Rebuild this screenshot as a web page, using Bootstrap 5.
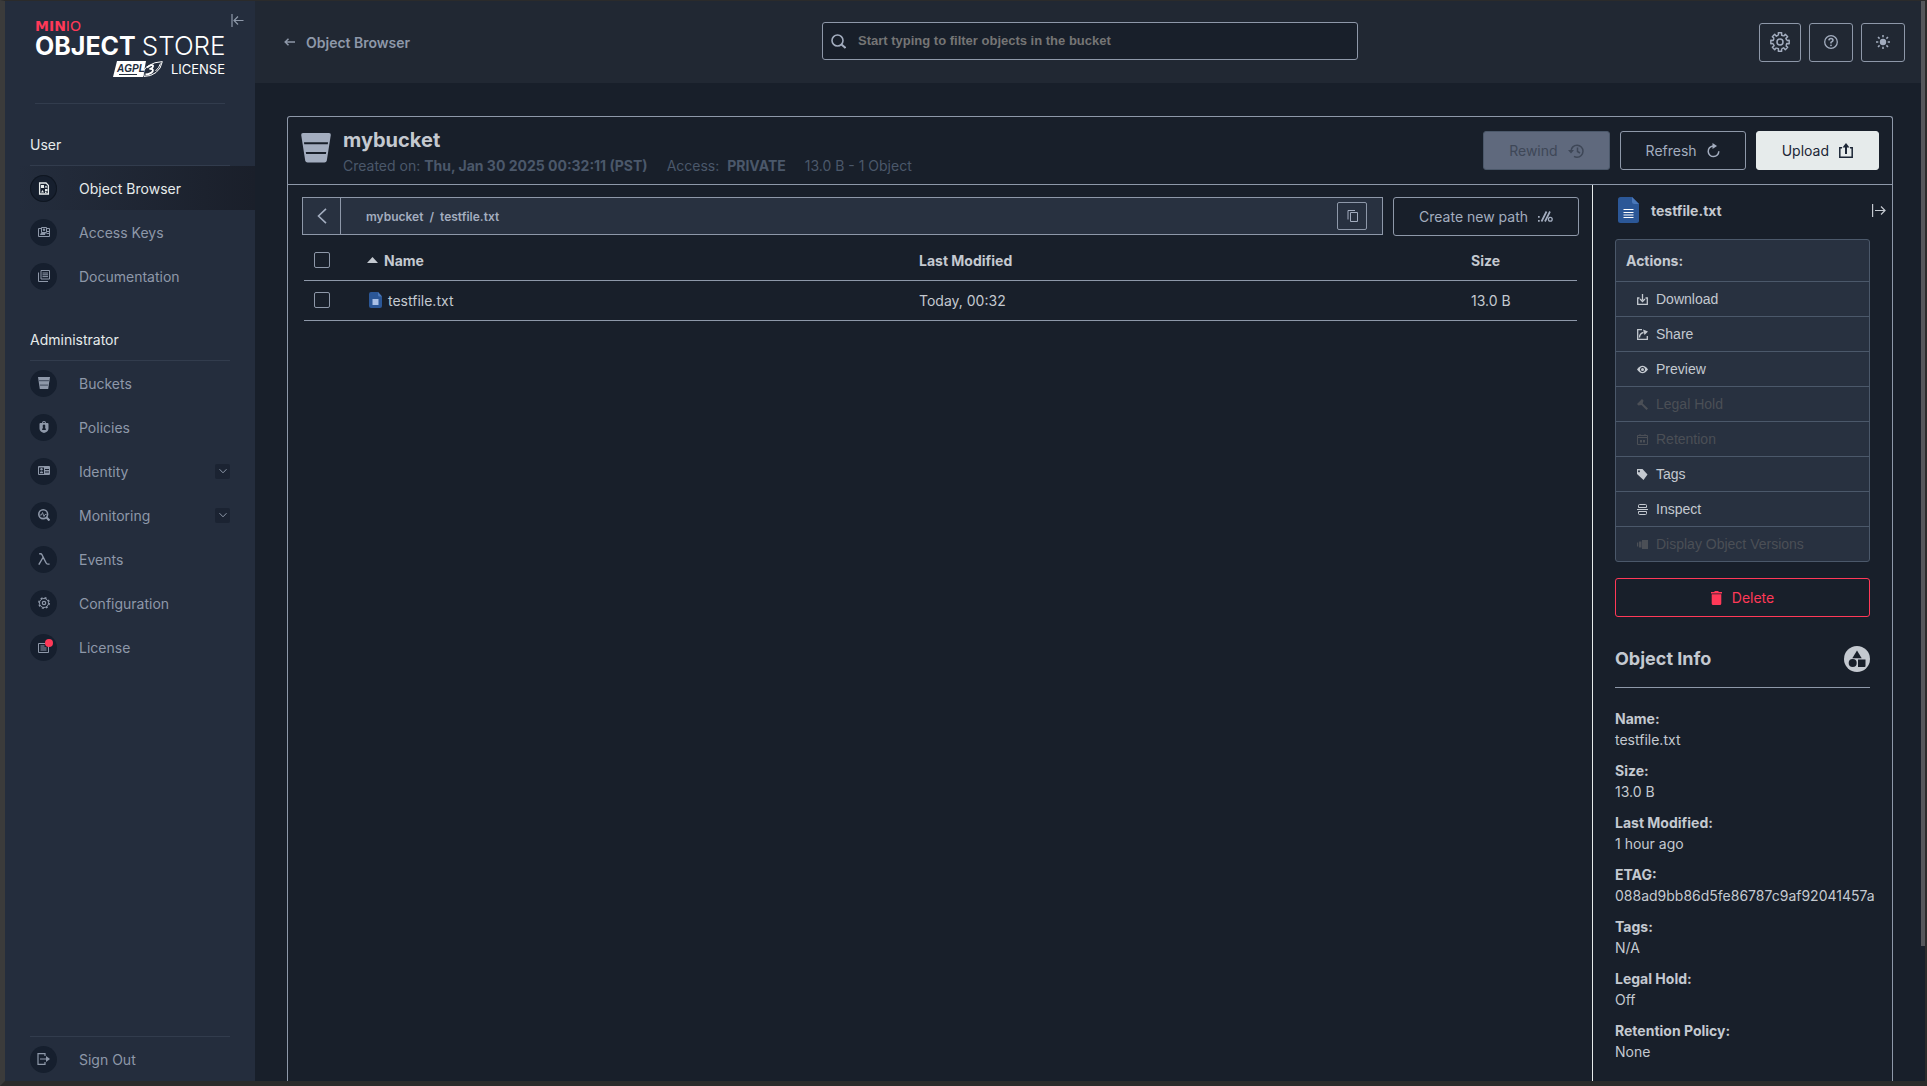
<!DOCTYPE html>
<html lang="en" data-bs-theme="dark">
<head>
<meta charset="utf-8">
<meta name="viewport" content="width=device-width, initial-scale=1">
<title>MinIO Console</title>
<link href="https://cdn.jsdelivr.net/npm/bootstrap@5.3.0/dist/css/bootstrap.min.css" rel="stylesheet">
<style>
:root{--line:#8e98a9;--txt:#c4c9d0;--muted:#4b586a;--soft:#8e98a9;--panel:#283140;--bg:#181f2a;--steel:#4b586a;--red:#ff3958}
body{font-family:Inter,"Liberation Sans",sans-serif;font-size:14px;line-height:21px;color:var(--txt);background:var(--bg)}
h1,h2,h3{color:var(--txt)}
a{text-decoration:none;color:inherit}
svg{display:block;flex:none;fill:currentColor}
.ln{fill:none;stroke:currentColor}
.frame{min-height:100vh;border:solid #2b2b2b;border-width:1px 2px 5px 5px;border-left-color:#3b3b3b;position:relative}
.thumb{position:absolute;right:0;top:0;width:4px;height:87.5%;background:#55575b}
/* sidebar */
.side{width:250px;flex:none;background:#242d3d;color:var(--soft)}
.brand{margin:0 30px;height:103px;border-bottom:1px solid #323c4d;padding-top:18px;color:#fff}
.brand .b-top{font:700 14px/14px "DejaVu Sans",sans-serif;color:var(--red)}
.brand .b-top span{font-weight:400}
.brand .b-main{font-size:25px;line-height:26px;font-weight:700;white-space:nowrap}
.brand .b-main span{font-size:26px;font-weight:300}
.brand .b-lic{font-size:13px;line-height:20px}
.collapse-btn{position:absolute;left:226px;top:13px}
.bare{background:none;border:0;padding:0;color:inherit}
.side h2{font-size:14px;line-height:21px;font-weight:400;color:#e6ebeb;margin:31px 25px 0;padding-bottom:10px;border-bottom:1px solid #323c4d}
.side .brand + h2{margin-top:30px}
.side a{height:44px;padding:0 25px;gap:22px}
.dot{width:27px;height:27px;border-radius:50%;background:#161f2e;position:relative}
.side a.on{color:#e6ebeb;background:linear-gradient(90deg,#242d3d 5%,#1a1f2a)}
.side a.on .dot{box-shadow:inset 0 0 0 1px #0f1621}
.note{position:absolute;left:15px;top:5px;width:8px;height:8px;border-radius:50%;background:var(--red)}
.chev{width:15px;height:15px;background:#1b2332;border-radius:2px}
.out{border-top:1px solid #323c4d;margin:0 25px}
.side .out a{padding:0}
/* top bar */
.main-col{min-width:0}
.top{height:82px;background:#212833;padding:0 20px;display:grid;grid-template-columns:1fr minmax(0,536px) 1fr}
.top .crumb{font-weight:600;color:var(--soft);gap:11px;padding-left:9px}
.search{position:relative;color:#a3adbf;padding-bottom:2px}
.search svg{position:absolute;left:9px;top:12px}
.search input{height:38px;width:100%;background:var(--bg);border:1px solid var(--line);border-radius:3px;padding:0 35px 2px;font:700 13px "Liberation Sans",sans-serif;color:var(--txt)}
.search input::placeholder{color:#757575;opacity:1}
.cbtn{height:39px;border:1px solid var(--line);border-radius:3px;background:none;color:#a3adbf;padding:0 25px;gap:10px;font-size:14px}
.cbtn.sq{width:44px;padding:0}
.cbtn.sq:first-child{width:42px}
.cbtn.off{background:#5f697d;border-color:#4b586a;color:#3e4757}
.cbtn.call{background:#e6ebeb;border-color:#e6ebeb;color:#1c2636}
.cbtn.del{border-color:var(--red);color:var(--red)}
/* content */
.page{padding:33px 32px 0}
.boxed{border:1px solid var(--line);border-bottom:0;border-radius:3px 3px 0 0}
.bhead{height:68px;padding:11px 13px 0;border-bottom:1px solid var(--line)}
.bhead h1{font-size:20px;line-height:24px;font-weight:700;margin:0 0 3px}
.bk{color:#a3adbf;margin-top:5px}
.bk-text{margin-left:12px}
.acts-top,.gap-path{gap:10px}
.acts-top{padding-top:3px}
.meta{color:var(--muted);gap:19px}
.list-pane{padding:12px 13px 0 14px;min-width:0}
.pathbar{height:38px;border:1px solid var(--line);background:var(--panel);color:#a3adbf;font-weight:600;font-size:12px}
.pathbar .up{width:38px;align-self:stretch;border-right:1px solid var(--line)}
.trail{padding-left:25px}
.copy{width:30px;height:28px;border:1px solid var(--line);border-radius:2px;margin-right:15px}
.tbl{width:calc(100% - 4px);margin:5px 2px 0;table-layout:fixed;border-collapse:collapse}
.tbl th,.tbl td{height:40px;padding:0;border-bottom:1px solid var(--line);vertical-align:middle}
.tbl th{font-weight:700;height:39px}
.tbl .c1{width:63px;padding-left:10px}
.tbl .c3{width:552px}.tbl .c4{width:106px}
.tbl input{appearance:none;display:block;width:16px;height:16px;border:1px solid var(--line);border-radius:2px;background:none;margin:0}
.nm{gap:6px}
.tbl td .nm{padding-left:2px}
.side-pane{width:300px;flex:none;border-left:1px solid #e6ebeb;padding:12px 22px 0}
.phead{gap:12px;padding-left:3px;margin-right:-16px}
.acts{border:1px solid var(--steel);border-radius:3px;background:var(--panel);margin-top:16px}
.acts h3{font-size:14px;line-height:21px;font-weight:700;margin:0;padding:10px}
.acts button{width:100%;height:35px;border-top:1px solid var(--steel);padding-left:21px;gap:8px;font:14px "Liberation Sans",sans-serif;color:var(--txt)}
.acts button:disabled{color:#4b4f56}
.info h2{font-size:18px;line-height:26px;font-weight:700;margin:0}
.info{margin-top:29px;padding-bottom:15px;border-bottom:1px solid var(--line)}
.facts{margin:20px 0 0}
.facts dt{font-weight:700;margin-bottom:0}
.facts dd{margin:0 0 10px;white-space:nowrap}
</style>
</head>
<body>
<svg width="0" height="0" class="position-absolute" aria-hidden="true">
<symbol id="bucket" viewBox="0 0 30 30"><path d="M2 0h26q2 0 1.800 2L25.800 27.500q-.4 2-2.300 2h-17q-1.900 0-2.300-2L.2 2Q0 0 2 0z"/><path fill="#181f2a" d="M3 9.300h24l-.2 1.900H3.200zM4.800 19h20.400l-.3 1.900H5.100z"/></symbol>
<symbol id="bk-s" viewBox="0 0 12 12"><path d="M0 0h12L10.200 12H1.800z"/><path fill="#4e586a" d="M1 3h10l-.2 1.200H1.200zM1.900 7.500h8.200l-.2 1.200H2.100z"/></symbol>
<symbol id="chev" viewBox="0 0 8 8"><path class="ln" d="M.5 2.200 4 5.800 7.500 2.200"/></symbol>
<symbol id="tooth" overflow="visible"><path class="ln" stroke-width="1.400" stroke-linejoin="round" d="M6.700-1.550 9.200-1.700V1.700L6.700 1.550A6.900 6.900 0 0 1 5.850 3.660"/></symbol>
<symbol id="doc" viewBox="0 0 21 26"><path fill="#2b5797" d="M2.500 0H14l7 7v16.500q0 2.500-2.500 2.500h-16Q0 26 0 23.500v-21Q0 0 2.500 0z"/><path fill="#4a78ba" d="M14 0v4.500Q14 7 16.500 7H21z"/><path fill="#fff" d="M5.500 12h10v1h-10zm0 3h10v1h-10zm0 2.500h10v1h-10zm0 2.500h10v1h-10z"/></symbol>
<symbol id="doc-s" viewBox="0 0 13 16"><path fill="#2b5797" d="M2 0h7l4 4.500V14q0 2-2 2H2q-2 0-2-2V2q0-2 2-2z"/><path fill="#4a78ba" d="M9 0v3q0 1.500 1.500 1.500H13z"/><path fill="#a9c0e6" d="M3.500 7h6v6h-6z"/></symbol>
</svg>
<div class="frame d-flex">
<div class="thumb"></div>
<nav class="side d-flex flex-column position-relative">
  <button class="bare collapse-btn" aria-label="Collapse menu"><svg width="13" height="13" viewBox="0 0 13 13"><path class="ln" stroke-width="1.200" d="M1 0v13M12.500 6.500H3.500M7 2.500l-4 4 4 4"/></svg></button>
  <div class="brand">
    <div class="b-top">MIN<span>IO</span></div>
    <div class="b-main">OBJECT <span>STORE</span></div>
    <div class="b-lic d-flex justify-content-end align-items-center gap-2">
      <svg width="50" height="16" viewBox="0 0 50 16"><path fill="#fff" d="M4 0h29l-3 16H0z"/><path fill="#242d3d" stroke="#fff" d="M31 15.400Q29 8 36 4.500 41 1 49.300.6 48 8 43 11.500 38 15.600 31 15.400z"/><path class="ln" stroke="#fff" stroke-width="1.800" d="M34 6.500Q39 3 40 4.500 40.500 7 36.500 8q4-.5 3.300 2-1.500 3-7.300 3.500"/><path class="ln" stroke="#fff" d="M42.500 10Q46 7 47.500 2.500"/><text x="4" y="11" font-family="Liberation Sans" font-size="10" font-weight="700" font-style="italic" fill="#242d3d">AGPL</text><path fill="#242d3d" d="M6 13h18v1H6z"/></svg>
      <span>LICENSE</span>
    </div>
  </div>
  <h2>User</h2>
  <a href="#" class="on d-flex align-items-center"><span class="dot d-flex align-items-center justify-content-center"><svg width="12" height="13" viewBox="0 0 12 13"><path class="ln" stroke-width="1.300" d="M1.600 1h6.400l2.400 2.400V12H1.600z"/><path d="M3 3h3v3H3zM6.500 5.500l1.500-2 1.500 2zM7 7h2.500v2H7zM3 10.500 4.500 8l1.500 2.500zM7 9.500h1.500V11H7z"/></svg></span>Object Browser</a>
  <a href="#" class="d-flex align-items-center"><span class="dot d-flex align-items-center justify-content-center"><svg width="12" height="10" viewBox="0 0 12 10"><path class="ln" d="M3 1.500H.5v8h11v-8H9M3.500.5h5v5h-5z"/><circle cx="6" cy="2.700" r="1.200"/><path d="M2 8q0-2 2-2.500h4Q7 7 7 8zM8.500 4H11v1H8.500zm0 2H11v1H8.500z"/></svg></span>Access Keys</a>
  <a href="#" class="d-flex align-items-center"><span class="dot d-flex align-items-center justify-content-center"><svg width="12" height="12" viewBox="0 0 12 12"><path class="ln" d="M3 .5h8.500v8.500H3zM.5 2.500v9H10M4.500 3H10M4.500 4.800H10M4.500 6.600H10"/></svg></span>Documentation</a>
  <h2>Administrator</h2>
  <a href="#" class="d-flex align-items-center"><span class="dot d-flex align-items-center justify-content-center"><svg width="12" height="12"><use href="#bk-s"/></svg></span>Buckets</a>
  <a href="#" class="d-flex align-items-center"><span class="dot d-flex align-items-center justify-content-center"><svg width="10" height="12" viewBox="0 0 10 12"><path fill-rule="evenodd" d="M3 2q0-2 2-2t2 2h1.500q1 0 1 1v4.500Q9.500 10.500 5 12 .5 10.500.5 7.500V3q0-1 1-1zm1 0h2q0-1-1-1T4 2zm1 1.500A1.500 1.500 0 0 0 4 6L3 9h4L6 6a1.500 1.500 0 0 0-1-2.500z"/></svg></span>Policies</a>
  <a href="#" class="d-flex align-items-center"><span class="dot d-flex align-items-center justify-content-center"><svg width="12" height="10" viewBox="0 0 12 10"><path fill-rule="evenodd" d="M1 0h10q1 0 1 1v7q0 1-1 1H1Q0 9 0 8V1q0-1 1-1zm0 1.500V8h5V1.500zM7 3v1h4V3zm0 2.500v1h4v-1z"/><circle cx="3.500" cy="3.300" r="1.200"/><path d="M1.800 7.200q0-2 1.700-2t1.700 2z"/></svg></span>Identity<span class="chev ms-auto d-flex align-items-center justify-content-center"><svg width="8" height="8"><use href="#chev"/></svg></span></a>
  <a href="#" class="d-flex align-items-center"><span class="dot d-flex align-items-center justify-content-center"><svg width="12" height="12" viewBox="0 0 12 12"><circle class="ln" stroke-width="1.600" cx="5.200" cy="5.200" r="4.400"/><path class="ln" stroke-width="2.200" d="m8.300 8.300 3.200 3.200"/><path class="ln" stroke-width=".9" d="M2 6h1.500l1-2.500 1.500 4 1-2h1.500"/></svg></span>Monitoring<span class="chev ms-auto d-flex align-items-center justify-content-center"><svg width="8" height="8"><use href="#chev"/></svg></span></a>
  <a href="#" class="d-flex align-items-center"><span class="dot d-flex align-items-center justify-content-center"><svg width="12" height="12" viewBox="0 0 12 12"><path class="ln" stroke-width="1.400" d="M1.200.8h1.300q1 0 1.500 1l4 8q.6 1.300 1.800 1.300h1.800M5 4.500.8 11.700"/></svg></span>Events</a>
  <a href="#" class="d-flex align-items-center"><span class="dot d-flex align-items-center justify-content-center"><svg width="12" height="12" viewBox="0 0 12 12"><circle class="ln" cx="6" cy="6" r="4.500"/><circle class="ln" stroke-width="1.400" stroke-dasharray="2 2.120" cx="6" cy="6" r="5.250"/><circle class="ln" stroke-width="1.200" cx="6" cy="6" r="1.700"/></svg></span>Configuration</a>
  <a href="#" class="d-flex align-items-center"><span class="dot d-flex align-items-center justify-content-center"><svg width="12" height="12" viewBox="0 0 12 12"><path class="ln" d="M10.500 4v7.500H.5v-9H7M2.500 5h4M2.500 7h6M2.500 9h6"/></svg><span class="note"></span></span>License</a>
  <div class="out mt-auto"><a href="#" class="d-flex align-items-center"><span class="dot d-flex align-items-center justify-content-center"><svg width="13" height="12" viewBox="0 0 13 12"><path class="ln" stroke-width="1.200" d="M8 3V.6H1v10.800h7V9M3 6h8.500"/><path d="m9 3 4 3-4 3z"/></svg></span>Sign Out</a></div>
</nav>
<div class="flex-grow-1 d-flex flex-column main-col">
  <header class="top align-items-center">
    <a href="#" class="crumb d-flex align-items-center"><svg width="11" height="8" viewBox="0 0 11 8"><path class="ln" stroke-width="1.500" d="M11 4H1M4.500.7 1.200 4l3.300 3.300"/></svg>Object Browser</a>
    <div class="search"><svg width="15" height="15" viewBox="0 0 15 15"><circle class="ln" stroke-width="1.600" cx="6.500" cy="6.500" r="5.500"/><path class="ln" stroke-width="2" d="m10.500 10.500 4 3.500"/></svg><input type="text" aria-label="Filter objects" placeholder="Start typing to filter objects in the bucket"></div>
    <div class="d-flex justify-content-end gap-2">
      <button class="cbtn sq d-flex align-items-center justify-content-center" aria-label="Settings"><svg width="20" height="20" viewBox="-10 -10 20 20"><use href="#tooth"/><use href="#tooth" transform="rotate(45)"/><use href="#tooth" transform="rotate(90)"/><use href="#tooth" transform="rotate(135)"/><use href="#tooth" transform="rotate(180)"/><use href="#tooth" transform="rotate(225)"/><use href="#tooth" transform="rotate(270)"/><use href="#tooth" transform="rotate(315)"/><circle class="ln" stroke-width="1.500" r="3"/></svg></button>
      <button class="cbtn sq d-flex align-items-center justify-content-center" aria-label="Help"><svg width="14" height="14" viewBox="0 0 14 14"><circle class="ln" stroke-width="1.300" cx="7" cy="7" r="6.300"/><path class="ln" stroke-width="1.500" d="M4.900 5.400Q5 3.500 7 3.500t2 1.800Q9 6.300 7 7.300v1.200"/><circle cx="7" cy="10.300" r=".9"/></svg></button>
      <button class="cbtn sq d-flex align-items-center justify-content-center" aria-label="Toggle theme"><svg width="14" height="14" viewBox="0 0 14 14"><circle cx="7" cy="7" r="3.200"/><path class="ln" stroke-width="1.500" d="M7 0v2.300M7 11.700V14M0 7h2.300M11.700 7H14M2 2l1.600 1.600M10.400 10.400 12 12M12 2l-1.600 1.600M3.600 10.400 2 12"/></svg></button>
    </div>
  </header>
  <main class="page flex-grow-1 d-flex flex-column">
    <div class="boxed flex-grow-1 d-flex flex-column">
      <div class="bhead d-flex align-items-start">
        <svg class="bk" width="30" height="30"><use href="#bucket"/></svg>
        <div class="bk-text">
          <h1>mybucket</h1>
          <div class="meta d-flex"><span>Created on: <b>Thu, Jan 30 2025 00:32:11 (PST)</b></span><span>Access: &nbsp;<b>PRIVATE</b></span><span>13.0 B - 1 Object</span></div>
        </div>
        <div class="ms-auto d-flex acts-top">
          <button class="cbtn off d-flex align-items-center" disabled>Rewind<svg width="16" height="14" viewBox="0 0 16 14"><path class="ln" stroke-width="1.500" d="M3 7a6 6 0 1 1 6 6.200 6 6 0 0 1-3-.8M9.500 3.500V7.500l2.500 1.500"/><path d="M0 6h6L3 9.500z"/></svg></button>
          <button class="cbtn d-flex align-items-center">Refresh<svg width="13" height="15" viewBox="0 0 13 15"><path class="ln" stroke-width="1.500" d="M7 3H6a5.300 5.300 0 1 0 5.800 5.300"/><path d="M5.500 0 10 3 5.500 6z"/></svg></button>
          <button class="cbtn call d-flex align-items-center">Upload<svg width="14" height="15" viewBox="0 0 14 15"><path class="ln" stroke-width="1.500" d="M3 4.800H.8v9.500h12.400V4.800H11"/><path class="ln" stroke-width="2" d="M7 11V2"/><path d="M3.500 4.500 7 0l3.500 4.500z"/></svg></button>
        </div>
      </div>
      <div class="flex-grow-1 d-flex">
        <div class="list-pane flex-grow-1">
          <div class="d-flex align-items-start gap-path">
            <div class="pathbar flex-grow-1 d-flex align-items-center">
              <button class="bare up d-flex align-items-center justify-content-center" aria-label="Back"><svg width="10" height="16" viewBox="0 0 10 16"><path class="ln" stroke-width="1.600" d="M9 .8 1.500 8 9 15.200"/></svg></button>
              <span class="trail flex-grow-1">mybucket&nbsp; /&nbsp; testfile.txt</span>
              <button class="bare copy d-flex align-items-center justify-content-center" aria-label="Copy path"><svg width="11" height="12" viewBox="0 0 11 12"><path class="ln" d="M3.500 2.500h7v9h-7zM1 9.500V.5h7"/></svg></button>
            </div>
            <button class="cbtn d-flex align-items-center">Create new path<svg width="15" height="11" viewBox="0 0 15 11"><path class="ln" stroke-width="1.700" d="M3.500 10.500 8.500 .5M7 10.500 12 .5"/><path d="M0 5h1.700v1.700H0zM0 9h1.700v1.700H0z"/><circle class="ln" stroke-width="1.300" cx="12.300" cy="8.300" r="1.900"/></svg></button>
          </div>
          <table class="tbl">
            <thead><tr><th class="c1"><input type="checkbox" aria-label="Select all"></th><th><span class="d-flex align-items-center nm"><svg width="11" height="6" viewBox="0 0 11 6"><path d="M0 6 5.500 0 11 6z"/></svg>Name</span></th><th class="c3">Last Modified</th><th class="c4">Size</th></tr></thead>
            <tbody><tr><td class="c1"><input type="checkbox" aria-label="Select testfile.txt"></td><td><span class="d-flex align-items-center nm"><svg width="13" height="16"><use href="#doc-s"/></svg>testfile.txt</span></td><td>Today, 00:32</td><td>13.0 B</td></tr></tbody>
          </table>
        </div>
        <aside class="side-pane">
          <div class="d-flex align-items-center phead"><svg width="21" height="26"><use href="#doc"/></svg><b>testfile.txt</b><button class="bare ms-auto" aria-label="Close panel"><svg width="14" height="13" viewBox="0 0 14 13"><path class="ln" stroke="#8e98a9" stroke-width="1.200" d="M.6 0v13M3 6.500h10M9 2.500l4 4-4 4"/></svg></button></div>
          <div class="acts">
            <h3>Actions:</h3>
            <button class="bare d-flex align-items-center"><svg width="11" height="11" viewBox="0 0 11 11"><path class="ln" stroke-width="1.300" d="M2.500 4H.7v6.300h9.600V4H8.500M5.500 0v6M3 5l2.500 2.500L8 5"/></svg>Download</button>
            <button class="bare d-flex align-items-center"><svg width="11" height="11" viewBox="0 0 11 11"><path class="ln" stroke-width="1.300" d="M5 .7H.7v9.600h9.600V7M2.500 8.500q0-4 4-5"/><path d="M6 .5 11 2.500 7.500 6z"/></svg>Share</button>
            <button class="bare d-flex align-items-center"><svg width="11" height="11" viewBox="0 0 11 11"><path fill-rule="evenodd" d="M0 5.500Q2.500 1.800 5.500 1.800T11 5.500Q8.500 9.200 5.500 9.200T0 5.500zM5.500 3a2.500 2.500 0 1 0 .01 0z"/><circle cx="5.500" cy="5.500" r="1.500"/></svg>Preview</button>
            <button class="bare d-flex align-items-center" disabled><svg width="11" height="11" viewBox="0 0 11 11"><path d="M0 5 5 0l1.500 1.500L5.700 4.500 11 9.500 9.500 11 4.500 6 1.500 6.500z"/></svg>Legal Hold</button>
            <button class="bare d-flex align-items-center" disabled><svg width="11" height="11" viewBox="0 0 11 11"><path class="ln" d="M.5 1.500h10v9H.5zM.5 3.500h10M3 0v2M8 0v2"/><path d="M3 6h2v2.500H3zM6 6h2v2.500H6z"/></svg>Retention</button>
            <button class="bare d-flex align-items-center"><svg width="11" height="11" viewBox="0 0 11 11"><path fill-rule="evenodd" d="M0 0h5.500L10.500 5.500 6.500 11 0 5zm2 1.200a1 1 0 1 0 .01 0z"/></svg>Tags</button>
            <button class="bare d-flex align-items-center"><svg width="11" height="11" viewBox="0 0 11 11"><path class="ln" d="M1.500 3.500V1.500q0-1 1-1h6q1 0 1 1v2zM1.500 7.500v2q0 1 1 1h6q1 0 1-1v-2zM0 5.500h11"/></svg>Inspect</button>
            <button class="bare d-flex align-items-center" disabled><svg width="11" height="11" viewBox="0 0 11 11"><path d="M0 3.500h1.200v4H0zM2 2.500h2.500v6H2zM5 1h6v9H5z"/></svg>Display Object Versions</button>
          </div>
          <button class="cbtn del w-100 mt-3 d-flex align-items-center justify-content-center"><svg width="11" height="14" viewBox="0 0 11 14"><path d="M3.500 0h4v1H11v1.500H0V1h3.500zM.7 3.300h9.600V12.500q0 1.500-1.500 1.500H2.200Q.7 14 .7 12.500z"/></svg>Delete</button>
          <div class="info d-flex align-items-center justify-content-between"><h2>Object Info</h2><svg width="26" height="26" viewBox="0 0 26 26"><circle cx="13" cy="13" r="13"/><g fill="#181f2a"><path d="m13 4.500 4.700 7.700H8.300z"/><circle cx="8.700" cy="17" r="4"/><path d="M14 13.500h7.500V20q0 1-1 1H14z"/></g></svg></div>
          <dl class="facts">
            <dt>Name:</dt><dd>testfile.txt</dd>
            <dt>Size:</dt><dd>13.0 B</dd>
            <dt>Last Modified:</dt><dd>1 hour ago</dd>
            <dt>ETAG:</dt><dd>088ad9bb86d5fe86787c9af92041457a</dd>
            <dt>Tags:</dt><dd>N/A</dd>
            <dt>Legal Hold:</dt><dd>Off</dd>
            <dt>Retention Policy:</dt><dd>None</dd>
          </dl>
        </aside>
      </div>
    </div>
  </main>
</div>
</div>
<script src="https://cdn.jsdelivr.net/npm/bootstrap@5.3.0/dist/js/bootstrap.bundle.min.js"></script>
</body>
</html>
